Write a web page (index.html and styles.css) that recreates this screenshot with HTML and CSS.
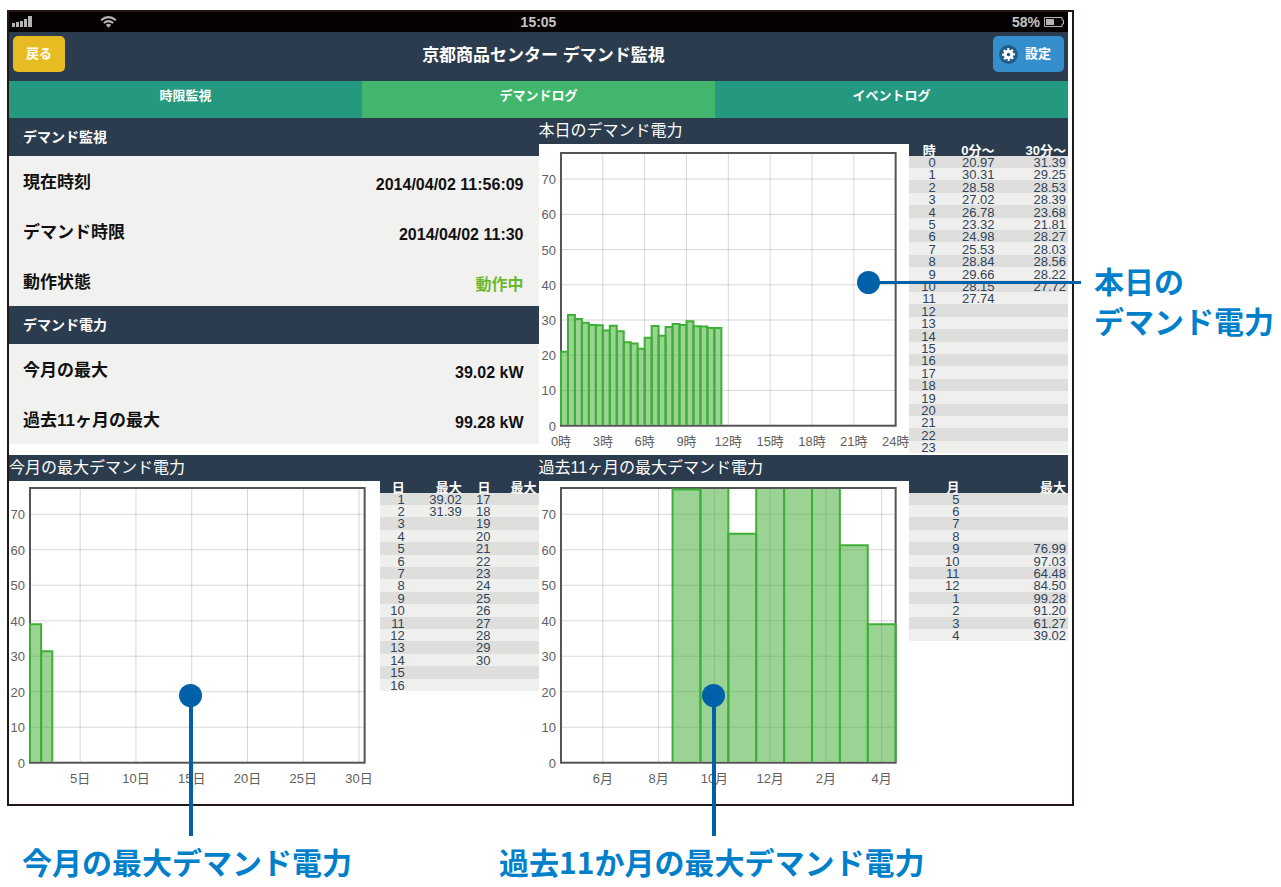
FILE: index.html
```html
<!DOCTYPE html>
<html lang="ja">
<head>
<meta charset="utf-8">
<title>京都商品センター デマンド監視</title>
<link rel="stylesheet" href="styles.css">
</head>
<body>
<div class="page">
  <main class="device">
    <div class="status">
      <div class="status-left">
        <svg width="21" height="12" viewBox="0 0 21 12" aria-hidden="true"><path d="M0 7h3v4H0zM4 6h3v5H4zM8 5h3v6H8zM12 3h3v8h-3zM16 0h4v11h-4z"/></svg>
        <svg class="wifi" width="17" height="12" viewBox="0 0 17 12" aria-hidden="true"><path class="arc" d="M1 4.200Q8.500-2 16 4.200M3.800 7Q8.500 3.200 13.200 7"/><path d="M5.800 8.900Q8.500 6.800 11.200 8.900L8.500 11.800z"/></svg>
      </div>
      <time>15:05</time>
      <div class="status-right">58%
        <svg width="22" height="12" viewBox="0 0 22 12" aria-hidden="true"><path class="cell" d="M1.500 1.500h17.500v2.500h1.500v4h-1.500v2.500H1.500z"/><path d="M3 3h8v6H3z"/></svg>
      </div>
    </div>
    <header class="bar">
      <button class="btn btn-back" type="button">戻る</button>
      <h1>京都商品センター デマンド監視</h1>
      <button class="btn btn-set" type="button">
        <svg width="19" height="19" viewBox="0 0 19 19" aria-hidden="true"><circle class="disc" cx="9.500" cy="9.500" r="9.500"/><circle class="cog" cx="9.500" cy="9.500" r="3.300"/><circle class="teeth" cx="9.500" cy="9.500" r="5.400" pathLength="80"/></svg>
        設定
      </button>
    </header>
    <nav class="tabs">
      <button type="button">時限監視</button>
      <button type="button" class="active">デマンドログ</button>
      <button type="button">イベントログ</button>
    </nav>
    <div class="board">
      <section class="summary">
        <h2>デマンド監視</h2>
        <dl>
          <div><dt>現在時刻</dt><dd>2014/04/02 11:56:09</dd></div>
          <div><dt>デマンド時限</dt><dd>2014/04/02 11:30</dd></div>
          <div><dt>動作状態</dt><dd class="running">動作中</dd></div>
        </dl>
        <h2>デマンド電力</h2>
        <dl>
          <div><dt>今月の最大</dt><dd>39.02 kW</dd></div>
          <div><dt>過去11ヶ月の最大</dt><dd>99.28 kW</dd></div>
        </dl>
      </section>
      <section class="panel">
        <h2>本日のデマンド電力</h2>
        <div class="panel-body">
          <div class="chart" id="chart-today"><span class="marker marker-right"></span></div>
          <table class="log log-today" id="table-today"></table>
        </div>
      </section>
      <section class="panel">
        <h2>今月の最大デマンド電力</h2>
        <div class="panel-body">
          <div class="chart" id="chart-month"><span class="marker marker-month"></span></div>
          <table class="log log-month" id="table-month"></table>
        </div>
      </section>
      <section class="panel">
        <h2>過去11ヶ月の最大デマンド電力</h2>
        <div class="panel-body">
          <div class="chart" id="chart-year"><span class="marker marker-year"></span></div>
          <table class="log log-year" id="table-year"></table>
        </div>
      </section>
    </div>
  </main>
  <aside class="note note-side">本日の<br>デマンド電力</aside>
  <div class="note notes-below">
    <p>今月の最大デマンド電力</p>
    <p>過去11か月の最大デマンド電力</p>
  </div>
</div>
<script src="script.js"></script>
</body>
</html>
```
FILE: styles.css
```css
* { box-sizing: border-box; }

body {
  margin: 0;
  background: #fff;
  color: #111;
  font-family: "Liberation Sans", "Noto Sans CJK JP", sans-serif;
}

h1, h2, p, dl, dd { margin: 0; }

button {
  border: 0;
  padding: 0;
  color: #fff;
  font: bold 13px/20px "Liberation Sans", "Noto Sans CJK JP", sans-serif;
}

.page {
  display: grid;
  grid-template-columns: minmax(0, 1fr) 187px;
  column-gap: 20px;
  padding: 10px 0 0 7px;
}

.device {
  border: 2px solid #231815;
  padding-right: 4px;
}

.status {
  display: grid;
  grid-template-columns: 1fr auto 1fr;
  align-items: center;
  height: 20px;
  padding: 0 3px;
  background: #060202;
  color: #c4c4c4;
  font-size: 14px;
  line-height: 20px;
  font-weight: bold;
}

.status svg { display: block; fill: #b4b4b4; }
.status .arc { fill: none; stroke: #b4b4b4; stroke-width: 2; }
.status .cell { fill: none; stroke: #b4b4b4; stroke-width: 1; }
.status-left { display: flex; align-items: center; }
.wifi { margin-left: 67px; }
.status-right { display: flex; align-items: center; justify-content: flex-end; gap: 3px; }

.bar {
  display: grid;
  grid-template-columns: 1fr auto 1fr;
  align-items: start;
  height: 49px;
  padding: 4px;
  background: #2b3c4e;
}

.bar h1 {
  padding-left: 10px;
  color: #fff;
  font-size: 17px;
  line-height: 40px;
}

.btn { height: 36px; border-radius: 5px; }
.btn-back { justify-self: start; width: 52px; background: #e7bc22; }
.btn-set {
  justify-self: end;
  display: flex;
  align-items: center;
  gap: 7px;
  padding: 0 13px 0 6px;
  background: #368fcd;
}
.disc { fill: #205d8b; }
.cog { fill: none; stroke: #fff; stroke-width: 3; }
.teeth { fill: none; stroke: #fff; stroke-width: 2; stroke-dasharray: 5 5; stroke-dashoffset: 3; }

.tabs {
  display: grid;
  grid-template-columns: repeat(3, 1fr);
  height: 37px;
}
.tabs button { padding-bottom: 8px; background: #24997f; }
.tabs .active { background: #41b66c; }

.board { display: grid; grid-template-columns: repeat(2, minmax(0, 1fr)); }

.summary h2 {
  padding-left: 14px;
  background: #2b3c4e;
  color: #fff;
  font-size: 14px;
  line-height: 38px;
}
.summary dl { background: #f1f1f0; font-weight: bold; }
.summary dl div {
  display: flex;
  justify-content: space-between;
  height: 50px;
  padding: 2px 15px 0 14px;
  line-height: 50px;
}
.summary dt { font-size: 17px; }
.summary dd { padding-top: 2px; font-size: 16px; }
.running { color: #6cb92d; }

.panel h2 {
  background: #2b3c4e;
  color: #fff;
  font-size: 16px;
  font-weight: normal;
  line-height: 26px;
}
.panel-body {
  display: grid;
  grid-template-columns: 7fr 3fr;
  align-items: start;
}

.chart { position: relative; }
.chart svg { display: block; width: 100%; height: auto; }
.chart text { fill: #606060; font-size: 13px; }
.grid-line { stroke: #000; stroke-opacity: 0.16; }
.frame { fill: none; stroke: #545454; stroke-width: 2; }
.column { fill: #37a82a; fill-opacity: 0.5; stroke: #3fb037; stroke-width: 2; }

.marker {
  position: absolute;
  z-index: 1;
  width: 23px;
  height: 23px;
  border-radius: 50%;
  background: #0061a9;
}
.marker::after { content: ""; position: absolute; background: #0061a9; }
.marker-right { left: 86%; top: 127px; }
.marker-right::after { left: 20px; top: 10px; width: 204px; height: 3px; }
.marker-month, .marker-year { top: 203px; }
.marker-month { left: 46%; }
.marker-year { left: 44%; }
.marker-month::after, .marker-year::after { left: 10px; top: 20px; width: 4px; height: 132px; }

.log {
  width: 100%;
  border-collapse: collapse;
  table-layout: fixed;
  color: #2f4459;
  font-size: 13px;
  line-height: 10px;
}
.log th, .log td { height: 12px; padding: 2px 2px 0 0; text-align: right; white-space: nowrap; }
.log th { background: #2b3c4e; color: #fff; }
.log tbody tr:nth-child(5n+3) td, .log tbody tr:nth-child(5n) td { height: 13px; }
.log tbody tr:nth-child(odd) { background: #dededd; }
.log tbody tr:nth-child(even) { background: #efefee; }
.log-today th:nth-child(1) { width: 18%; }
.log-today th:nth-child(2) { width: 37%; }
.log-month th:nth-child(1) { width: 17%; }
.log-month th:nth-child(2) { width: 36%; }
.log-month th:nth-child(3) { width: 18%; }
.log-year th:nth-child(1) { width: 33%; }

.note {
  color: #0080cb;
  font: bold 30px/40px "Noto Sans CJK JP", sans-serif;
  white-space: nowrap;
}
.note-side { padding-top: 250px; }
.notes-below {
  display: grid;
  grid-template-columns: 477fr 575fr;
  padding: 35px 0 0 15px;
}
```
FILE: script.js
```js
const SVG_NS = 'http://www.w3.org/2000/svg';

const first = [20.97, 30.31, 28.58, 27.02, 26.78, 23.32, 24.98, 25.53, 28.84, 29.66, 28.15, 27.74];
const second = [31.39, 29.25, 28.53, 28.39, 23.68, 21.81, 28.27, 28.03, 28.56, 28.22, 27.72];
const daily = [39.02, 31.39];
const months = [5, 6, 7, 8, 9, 10, 11, 12, 1, 2, 3, 4];
const monthly = [null, null, null, null, 76.99, 97.03, 64.48, 84.50, 99.28, 91.20, 61.27, 39.02];

function add(parent, name, attrs, text) {
  const node = document.createElementNS(SVG_NS, name);
  for (const key in attrs) node.setAttribute(key, attrs[key]);
  if (text !== undefined) node.textContent = text;
  parent.appendChild(node);
}

function drawChart(id, { left, top, height, min, max, ticks, values, start, step }) {
  const width = 335, bottom = 282, peak = 77.4;
  const svg = document.createElementNS(SVG_NS, 'svg');
  svg.setAttribute('viewBox', `0 0 371 ${height}`);
  const px = v => left + (v - min) / (max - min) * width;
  const py = v => bottom - Math.min(v, peak) / peak * (bottom - top);
  for (let v = 0; v <= 70; v += 10) {
    if (v) add(svg, 'line', { class: 'grid-line', x1: left, x2: left + width, y1: py(v), y2: py(v) });
    add(svg, 'text', { x: left - 5, y: py(v) + 5, 'text-anchor': 'end' }, v);
  }
  for (const [at, label] of ticks) {
    add(svg, 'line', { class: 'grid-line', x1: px(at), x2: px(at), y1: top, y2: bottom });
    add(svg, 'text', { x: px(at), y: bottom + 20, 'text-anchor': 'middle' }, label);
  }
  add(svg, 'rect', { class: 'frame', x: left, y: top, width, height: bottom - top });
  values.forEach((v, i) => {
    if (v === null) return;
    const a = px(start + i * step), b = px(start + (i + 1) * step);
    if (v > peak) {
      add(svg, 'rect', { class: 'column', style: 'stroke:none', x: a, y: top + 1, width: b - a, height: bottom - top - 2 });
      add(svg, 'path', { class: 'column', d: `M${a} ${top + 1}V${bottom - 1}M${b} ${top + 1}V${bottom - 1}` });
    } else {
      add(svg, 'path', { class: 'column', d: `M${a} ${bottom - 1}V${py(v)}H${b}V${bottom - 1}` });
    }
  });
  document.getElementById(id).prepend(svg);
}

function fillTable(id, heads, rows) {
  const cell = v => (v === undefined || v === null ? '' : v);
  document.getElementById(id).innerHTML =
    `<thead><tr>${heads.map(h => `<th scope="col">${h}</th>`).join('')}</tr></thead>` +
    `<tbody>${rows.map(r => `<tr>${r.map(v => `<td>${cell(v)}</td>`).join('')}</tr>`).join('')}</tbody>`;
}

const fixed = v => (v ? v.toFixed(2) : '');
const range = n => Array.from({ length: n }, (_, i) => i);

drawChart('chart-today', {
  left: 22, top: 9, height: 311, min: 0, max: 24,
  ticks: range(9).map(i => [i * 3, `${i * 3}時`]),
  values: range(23).map(i => (i % 2 ? second : first)[i >> 1]), start: 0, step: 0.5
});
drawChart('chart-month', {
  left: 21, top: 7, height: 324, min: 0.5, max: 30.5,
  ticks: range(6).map(i => [i * 5 + 5, `${i * 5 + 5}日`]),
  values: daily, start: 0.5, step: 1
});
drawChart('chart-year', {
  left: 22, top: 7, height: 324, min: 0.5, max: 12.5,
  ticks: range(6).map(i => [i * 2 + 2, `${months[i * 2 + 1]}月`]),
  values: monthly, start: 0.5, step: 1
});

fillTable('table-today', ['時', '0分〜', '30分〜'], range(24).map(i => [i, fixed(first[i]), fixed(second[i])]));
fillTable('table-month', ['日', '最大', '日', '最大'],
  range(16).map(i => [i + 1, fixed(daily[i]), i < 14 ? i + 17 : '', '']));
fillTable('table-year', ['月', '最大'], months.map((m, i) => [m, fixed(monthly[i])]));
```
